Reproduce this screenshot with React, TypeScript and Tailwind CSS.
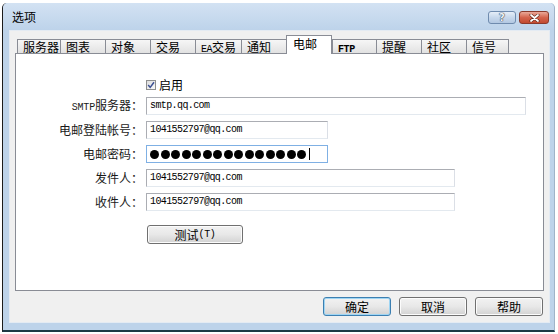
import React from "react"

const cjk = "font-['Noto_Sans_CJK_SC','Noto_Sans',sans-serif]"
const mono = "font-['Liberation_Mono',monospace]"

type TabDef = { key: string; label: React.ReactNode; w: string; active?: boolean }

const tabs: TabDef[] = [
  { key: "server", label: "服务器", w: "w-[43px]" },
  { key: "chart", label: "图表", w: "w-[45px]" },
  { key: "object", label: "对象", w: "w-[45px]" },
  { key: "trade", label: "交易", w: "w-[45px]" },
  {
    key: "ea",
    label: (
      <>
        <span className={`${mono} text-[10px] tracking-[-0.5px]`}>EA</span>交易
      </>
    ),
    w: "w-[46px]",
  },
  { key: "notify", label: "通知", w: "w-[45px]" },
  { key: "mail", label: "电邮", w: "w-[46px]", active: true },
  {
    key: "ftp",
    label: <span className={`${mono} text-[10px] tracking-[-0.4px] font-bold`}>FTP</span>,
    w: "w-[44px]",
  },
  { key: "alert", label: "提醒", w: "w-[45px]" },
  { key: "community", label: "社区", w: "w-[45px]" },
  { key: "signal", label: "信号", w: "w-[43px]" },
]

const Tab = ({ tab, last }: { tab: TabDef; last: boolean }) => {
  if (tab.active) {
    return (
      <div
        className={`${tab.w} h-[19px] bg-white border-t border-l border-r border-[#898c95] pl-[6px] pt-[1px] text-[12px] leading-[14px] text-black`}
      >
        {tab.label}
      </div>
    )
  }
  return (
    <div
      className={`${tab.w} h-[14px] mb-[1px] bg-gradient-to-b from-[#f6f6f6] to-[#e2e2e2] border-t border-l border-[#898c95] ${
        last ? "border-r" : ""
      } pl-[5px] text-[12px] leading-[14px] text-black`}
    >
      {tab.label}
    </div>
  )
}

const Field = ({
  label,
  width,
  children,
  focused,
}: {
  label: React.ReactNode
  width: string
  children: React.ReactNode
  focused?: boolean
}) => (
  <div className="flex items-center h-[18px]">
    <div className="w-[127px] text-right text-[12px] leading-[18px] text-[#1a1a1a]">{label}</div>
    <div
      className={`ml-[3px] ${width} h-[18px] flex items-center pl-[3px] bg-white border ${
        focused ? "border-[#7fb0e4]" : "border-[#abadb3] border-r-[#dbdfe6] border-b-[#e3e9ef]"
      }`}
    >
      {children}
    </div>
  </div>
)

const MonoValue = ({ text }: { text: string }) => (
  <span className={`${mono} text-[10px] tracking-[-0.6px] leading-[12px] text-black`}>{text}</span>
)

const Button = ({
  children,
  width,
  primary,
}: {
  children: React.ReactNode
  width: string
  primary?: boolean
}) => (
  <div
    className={`${width} h-[19px] flex items-center justify-center rounded-[3px] border ${
      primary ? "border-[#3c7fb1] shadow-[inset_0_0_0_1px_#9fd5f3]" : "border-[#707070] shadow-[inset_0_0_0_1px_#fcfcfc]"
    } bg-gradient-to-b from-[#f2f2f2] via-[#e8e8e8] to-[#d2d2d2] text-[12px] leading-[14px] text-black`}
  >
    {children}
  </div>
)

export default function App() {
  return (
    <div className={`w-[558px] h-[334px] bg-white pt-[3px] pl-[2px] overflow-hidden ${cjk}`}>
      <div className="w-[553px] h-[329px] flex flex-col bg-[#bdd3ea] border-l border-b-2 border-l-[#1b1b1b] border-b-[#1d3a45] border-r border-r-[#9fb3c8] rounded-tl-[5px] rounded-tr-[5px]">
        {/* Title bar */}
        <div className="h-[27px] flex items-start justify-between bg-gradient-to-b from-[#d3e2f3] to-[#bdd3ea] rounded-t-[5px]">
          <div className="pl-[9px] pt-[7px] text-[12px] leading-[14px] text-black">选项</div>
          <div className="flex gap-[3px] pt-[8px] pr-[5px]">
            <div className="w-[28px] h-[13px] rounded-[3px] border border-[#6f8bae] bg-gradient-to-b from-[#e6eef8] via-[#c7d8ec] to-[#b3c8e2] flex items-center justify-center">
              <span className="font-['DejaVu_Sans',sans-serif] text-[10px] leading-[10px] font-bold text-[#eef2f7] [text-shadow:0_0_1px_#3e4c5e,0_0_1px_#3e4c5e,0_0_1px_#3e4c5e]">?</span>
            </div>
            <div className="w-[30px] h-[13px] rounded-[3px] border border-[#8b3a2c] bg-gradient-to-b from-[#e9a899] via-[#d4634d] to-[#c24a30] flex items-center justify-center">
              <svg width="11" height="8" viewBox="0 0 11 8">
                <path d="M2 1 L9 7 M9 1 L2 7" stroke="#5a2418" strokeWidth="3" strokeLinecap="round" />
                <path d="M2 1 L9 7 M9 1 L2 7" stroke="#ffffff" strokeWidth="1.8" strokeLinecap="round" />
              </svg>
            </div>
          </div>
        </div>

        {/* Client area */}
        <div className="ml-[6px] mr-[4px] h-[293px] bg-[#f0f0f0] border border-[#e4ebf3] pt-[4px] pl-[5px] pr-[5px]">
          {/* Tabs */}
          <div className="relative z-10 -mb-px flex items-end h-[19px] ml-[2px]">
            {tabs.map((t, i) => (
              <Tab key={t.key} tab={t} last={i === tabs.length - 1} />
            ))}
          </div>

          {/* Panel */}
          <div className="h-[238px] bg-white border border-[#898c95] pt-[26px]">
            <div className="flex items-center h-[10px] ml-[130px]">
              <svg width="10" height="10" viewBox="0 0 10 10">
                <defs>
                  <linearGradient id="cb" x1="0" y1="0" x2="1" y2="1">
                    <stop offset="0" stopColor="#dcdcdc" />
                    <stop offset="1" stopColor="#fbfbfb" />
                  </linearGradient>
                </defs>
                <rect x="0.5" y="0.5" width="9" height="9" fill="url(#cb)" stroke="#8e8f8f" />
                <path d="M2.2 5 L4.2 7.4 L8 2.2" fill="none" stroke="#3b4f92" strokeWidth="1.5" />
              </svg>
              <span className="ml-[3px] text-[12px] leading-[14px] text-black">启用</span>
            </div>

            <div className="mt-[7px] flex flex-col gap-[6px]">
              <Field
                label={
                  <>
                    <span className={`${mono} text-[10px] tracking-[-0.2px]`}>SMTP</span>服务器：
                  </>
                }
                width="w-[380px]"
              >
                <MonoValue text="smtp.qq.com" />
              </Field>
              <Field label="电邮登陆帐号：" width="w-[182px]">
                <MonoValue text="1041552797@qq.com" />
              </Field>
              <Field label="电邮密码：" width="w-[182px]" focused>
                <div className="flex items-center gap-[1.5px]">
                  {Array.from({ length: 15 }).map((_, i) => (
                    <span key={i} className="w-[9px] h-[9px] rounded-full bg-black" />
                  ))}
                  <span className="ml-[1px] w-[1px] h-[12px] bg-black" />
                </div>
              </Field>
              <Field label="发件人：" width="w-[309px]">
                <MonoValue text="1041552797@qq.com" />
              </Field>
              <Field label="收件人：" width="w-[309px]">
                <MonoValue text="1041552797@qq.com" />
              </Field>
            </div>

            <div className="mt-[14px] ml-[131px]">
              <Button width="w-[96px]">
                测试<span className={`${mono} text-[10px] tracking-[-0.4px]`}>(T)</span>
              </Button>
            </div>
          </div>

          {/* Dialog buttons */}
          <div className="mt-[6px] mr-[1px] flex justify-end gap-[8px]">
            <Button width="w-[68px]" primary>
              确定
            </Button>
            <Button width="w-[68px]">取消</Button>
            <Button width="w-[68px]">帮助</Button>
          </div>
        </div>
      </div>
    </div>
  )
}
